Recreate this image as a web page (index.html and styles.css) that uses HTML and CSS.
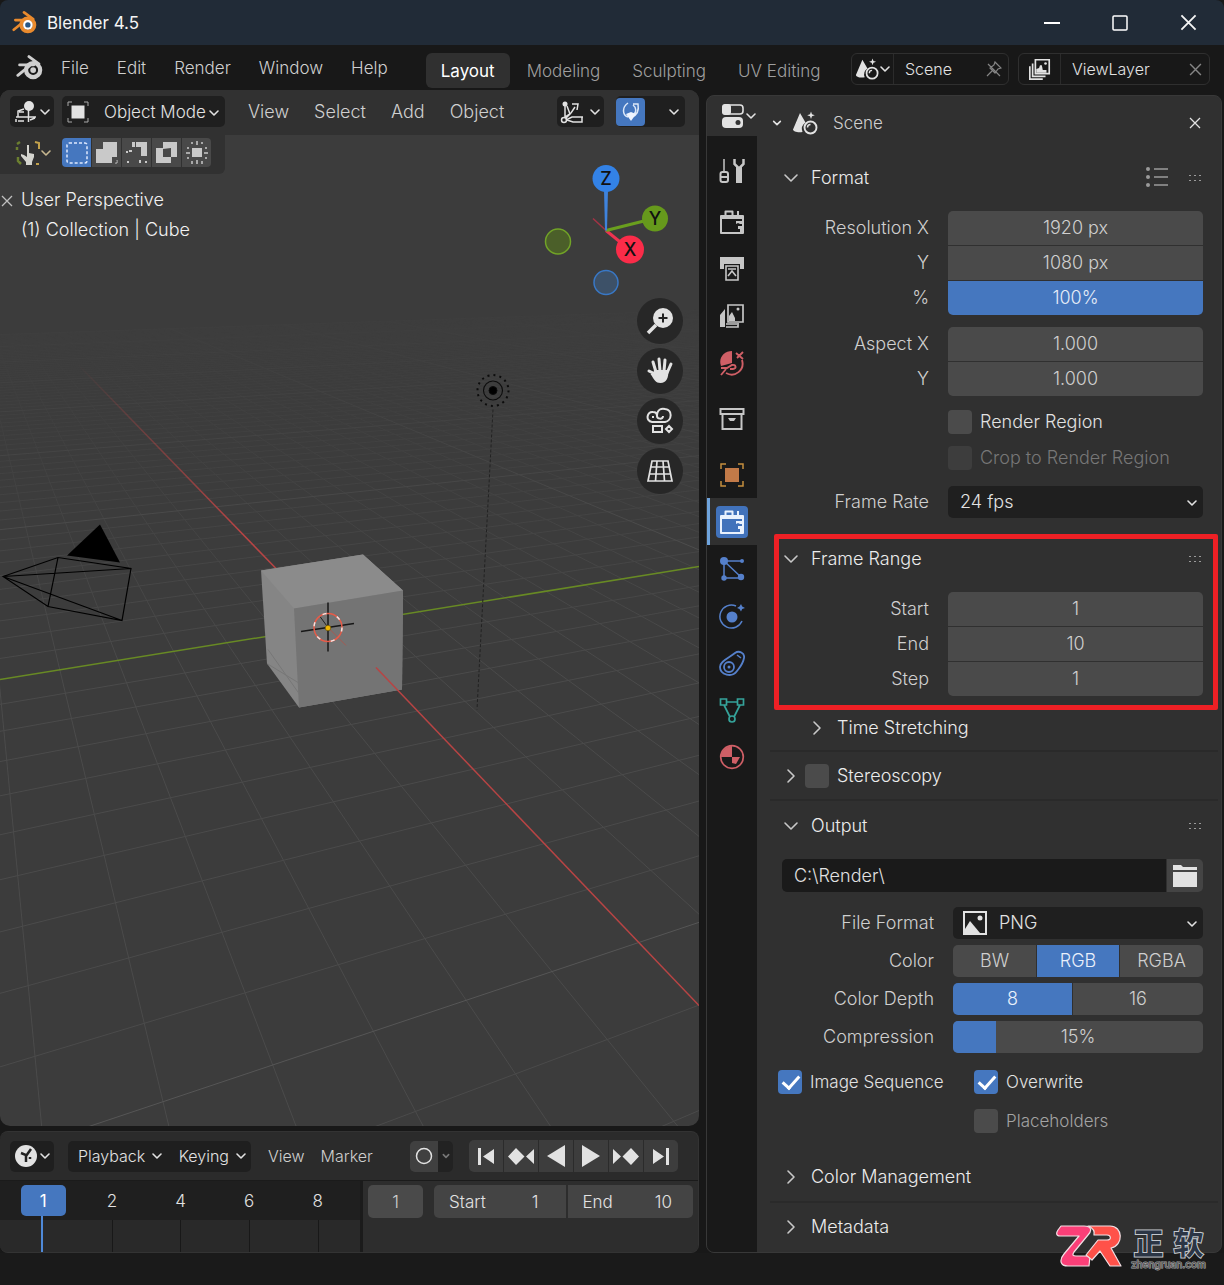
FILE: index.html
```html
<!DOCTYPE html>
<html lang="en">
<head>
<meta charset="utf-8">
<title>Blender 4.5</title>
<link rel="stylesheet" href="styles.css">
</head>
<body>
<svg class="defs" aria-hidden="true">
  <defs>
    <symbol id="chev" viewBox="0 0 12 12"><path vector-effect="non-scaling-stroke" d="M2 4l4 4 4-4" fill="none" stroke="currentColor" stroke-width="1.600" stroke-linecap="round" stroke-linejoin="round"/></symbol>
    <symbol id="x" viewBox="0 0 12 12"><path d="M1 1l10 10M11 1L1 11" fill="none" stroke="currentColor" stroke-width="1.300"/></symbol>
    <symbol id="blender" viewBox="0 0 26 26"><g fill="none" stroke="currentColor"><circle cx="16.500" cy="15.500" r="6.800" stroke-width="4"/><path d="M12.500 2.500L22 9.500M3.500 10.500H17M1.800 20.500L13 11.500" stroke-width="2.800" stroke-linecap="round"/></g></symbol>
    <symbol id="scene" viewBox="0 0 26 26"><path fill="currentColor" d="M8 3l5.500 9.500A8 8 0 0 0 10.500 22C6 23 1 21.500 1 19.500zM19 1.500l1 2.700 2.800 1-2.800 1-1 2.800-1-2.800-2.800-1 2.800-1z"/><circle cx="18.500" cy="17.500" r="6" fill="none" stroke="currentColor" stroke-width="1.900"/><path d="M15.500 17.500a3 3 0 0 1 3-3" fill="none" stroke="currentColor" stroke-width="1.500"/></symbol>
    <symbol id="layers" viewBox="0 0 26 26"><path fill="none" stroke="currentColor" stroke-width="1.800" d="M8 3h15v15H8zM5 7v14h14M2 10v14h14"/><path fill="currentColor" d="M9 17v-4l3-1 1-3h2l1 5h4v3z"/><circle cx="19" cy="7" r="1.400" fill="currentColor"/></symbol>
    <symbol id="camcase" viewBox="0 0 26 26"><path fill="none" stroke="currentColor" stroke-width="2" stroke-linejoin="round" d="M2 7h22v17H2zM6.500 6V2.500h7V6"/><path fill="currentColor" d="M2 6h22v4H2zM18 2h2v4h-2zM17 12h7v3h-3l-2-1-2 1zM19 17h5v6h-3v-3h-2z"/></symbol>
    <symbol id="grip" viewBox="0 0 14 8"><path fill="currentColor" d="M1 1h2v1H1zM6 1h2v1H6zM11 1h2v1h-2zM1 6h2v1H1zM6 6h2v1H6zM11 6h2v1h-2z"/></symbol>
  </defs>
</svg>
<div class="app">
  <header class="titlebar">
    <svg class="app-logo" viewBox="0 0 26 26"><use href="#blender"/><circle cx="16.500" cy="15.500" r="5" fill="#fff"/><circle cx="16.500" cy="15.500" r="2.800" fill="#265787"/></svg>
    <h1>Blender 4.5</h1>
    <div class="win-buttons">
      <button aria-label="Minimize"><svg width="16" height="16"><path d="M0 8h16" stroke="#fff" stroke-width="2"/></svg></button>
      <button aria-label="Maximize"><svg width="16" height="16"><rect x="1" y="1" width="14" height="14" rx="1" fill="none" stroke="#fff" stroke-width="1.500"/></svg></button>
      <button aria-label="Close"><svg width="17" height="17"><use href="#x"/></svg></button>
    </div>
  </header>

  <div class="topbar">
    <nav class="menus main-menus">
      <button aria-label="Blender"><svg width="27" height="27" viewBox="0 0 26 26"><use href="#blender"/><circle cx="16.500" cy="15.500" r="2.800" fill="currentColor"/></svg></button>
      <button>File</button><button>Edit</button><button>Render</button><button>Window</button><button>Help</button>
    </nav>
    <nav class="workspaces">
      <button class="current">Layout</button><button>Modeling</button><button>Sculpting</button><button>UV Editing</button>
    </nav>
    <div class="datablock">
      <button aria-label="Browse scene"><svg width="24" height="24"><use href="#scene"/></svg><svg class="chev" width="12" height="12"><use href="#chev"/></svg></button>
      <input class="scene-name" aria-label="Scene" value="Scene">
      <button class="dim" aria-label="Pin scene"><svg width="16" height="16" viewBox="0 0 16 16"><path d="M1 15l5-5M2 3l12 12M9 1l6 6-3 1-3 4-5-5 4-3z" fill="none" stroke="currentColor" stroke-width="1.200"/></svg></button>
    </div>
    <div class="datablock layer">
      <button aria-label="Browse view layer"><svg width="24" height="24"><use href="#layers"/></svg></button>
      <input class="layer-name" aria-label="View layer" value="ViewLayer">
      <button class="dim" aria-label="Remove view layer"><svg width="13" height="13"><use href="#x"/></svg></button>
    </div>
  </div>

  <main class="workspace">
    <div class="left">
      <section class="viewport" aria-label="3D viewport">
        <svg class="scene" viewBox="0 90 699 1037" preserveAspectRatio="xMidYMid slice">
          <defs>
            <linearGradient id="fog" gradientUnits="userSpaceOnUse" x1="0" y1="280" x2="0" y2="680"><stop offset="0" stop-color="#000"/><stop offset=".4" stop-color="#555"/><stop offset="1" stop-color="#fff"/></linearGradient>
            <mask id="far" maskUnits="userSpaceOnUse" x="0" y="90" width="699" height="1037"><rect y="90" width="699" height="1037" fill="url(#fog)"/></mask>
            <linearGradient id="redfade" gradientUnits="userSpaceOnUse" x1="78" y1="365" x2="240" y2="532"><stop offset="0" stop-color="#b04242" stop-opacity="0"/><stop offset="1" stop-color="#b84444"/></linearGradient>
          </defs>
          <g mask="url(#far)" fill="none">
            <path id="grid-minor" stroke="#4b4b4b"/>
            <path id="grid-major" stroke="#565656"/>
          </g>
          <path d="M78 365L277 570" stroke="url(#redfade)" stroke-width="1.500"/>
          <path d="M0 680L699 567" stroke="#688a24" stroke-width="1.500"/>
          <path d="M493 410L477 710" stroke="#222" stroke-dasharray="3 2"/>
          <path d="M261 571L363 555L403 591L402 690L299 708L267 664z" fill="#858585"/>
          <path d="M261 571L363 555L403 591L294 609z" fill="#8b8b8b"/>
          <path d="M294 609L403 591L402 690L299 708z" fill="#747474"/>
          <path d="M268 650L299 694M267 664L298 683" stroke="#777" fill="none"/>
          <path d="M376 668L699 1006" stroke="#b84444" stroke-width="1.500"/>
          <g fill="none">
            <path d="M301 632L354 624M328 603V652" stroke="#171717" stroke-width="1.500"/>
            <path d="M320 617l8 11" stroke="#222"/><path d="M330 630l16 16" stroke="#a65a50"/>
            <circle cx="328" cy="628" r="14" stroke="#e75b48" stroke-width="1.500"/>
            <circle cx="328" cy="628" r="14" stroke="#f3e5e2" stroke-width="1.500" stroke-dasharray="4 11"/>
          </g>
          <circle cx="328" cy="628.500" r="2.800" fill="#f0b500" stroke="#5b4700" stroke-width=".6"/>
          <path d="M100 525L67 556L120 563z" fill="#000"/>
          <path d="M3 577L58 558L131 569L122 621L48 607zM3 577L131 569M3 577L122 621M58 558L48 607" fill="none" stroke="#000" stroke-width="1.200"/>
          <g fill="none" stroke="#0c0c0c">
            <circle cx="493" cy="391" r="9.500" stroke-width="1.100"/>
            <circle cx="493" cy="391" r="15.500" stroke-width="2" stroke-dasharray="2 4.087"/>
            <circle cx="493" cy="391" r="4" fill="#000"/>
          </g>
          <g class="gizmo">
            <path d="M593 219L606 231" stroke="#a33345" stroke-width="1.500"/>
            <path d="M606 231L622 244" stroke="#ee3350" stroke-width="3"/>
            <path d="M606 231L646 221" stroke="#6a9f1e" stroke-width="3"/>
            <path d="M604 190h4l-1 41h-2z" fill="#3f83dc"/>
            <circle cx="606" cy="179" r="13.500" fill="#3382e6"/><circle cx="655" cy="219" r="13" fill="#66991c"/><circle cx="630" cy="250" r="14" fill="#fb2c49"/>
            <circle cx="558" cy="242" r="12.500" fill="#4b5f29" stroke="#71a327" stroke-width="1.500"/><circle cx="606" cy="283" r="12" fill="#3d5168" stroke="#3978c6" stroke-width="1.500"/>
            <text x="606" y="185">Z</text><text x="655" y="225">Y</text><text x="630" y="256">X</text>
          </g>
        </svg>

        <div class="view-header">
          <button class="dark editor-type" aria-label="Editor type"><svg width="24" height="24" viewBox="0 0 24 24"><circle cx="15" cy="6" r="5" fill="currentColor"/><path d="M14.500 2v20M2 17h20M4 17v-6l6-2M2 22v-3M5 12h5M4 21h6M16 20l5-2" fill="none" stroke="currentColor" stroke-width="1.500"/></svg><svg width="12" height="12"><use href="#chev"/></svg></button>
          <div class="dark mode">
            <svg width="22" height="22" viewBox="0 0 22 22"><path fill="currentColor" d="M4.500 4.500h13v13h-13z"/><path d="M1 5V1h4M17 1h4v4M21 17v4h-4M5 21H1v-4" fill="none" stroke="#aaa"/></svg>
            <select aria-label="Mode"><option>Object Mode</option></select>
            <svg class="arrow" width="12" height="12"><use href="#chev"/></svg>
          </div>
          <nav class="menus view-menus"><button>View</button><button>Select</button><button>Add</button><button>Object</button></nav>
          <button class="dark orient" aria-label="Transform orientation"><svg width="24" height="24" viewBox="0 0 24 24"><circle cx="5" cy="4" r="2.500" fill="currentColor"/><circle cx="4" cy="20" r="2.500" fill="none" stroke="currentColor" stroke-width="1.500"/><path d="M5 4v14M7 6l3 8-4 4M5 17l6-4 4-6M12 4h6l-1 6M6 20l6-3h11M15 17h7v5h-9l-6-2" fill="none" stroke="currentColor" stroke-width="1.500"/></svg><svg width="12" height="12"><use href="#chev"/></svg></button>
          <div class="dark snap">
            <button class="on" aria-label="Snap"><svg width="22" height="22" viewBox="0 0 22 22"><path d="M8 2C2 6 2 14 8 16M13 3h5c1 6-1 11-6 13M13 4c4 3 3 7 1 9" fill="none" stroke="#dce8f8" stroke-width="1.500"/><path d="M6 13l5-2 5 2-5 7z" fill="#eef4ff"/></svg></button>
            <button class="snap-more" aria-label="Snap options"><svg width="12" height="12"><use href="#chev"/></svg></button>
          </div>
        </div>
        <div class="tool-header">
          <button class="tool" aria-label="Active tool"><svg width="25" height="26" viewBox="0 0 25 26"><path d="M2 4l3-2M2 7v3M3 17v4l3 3" stroke="#6b7f30" stroke-width="2.500"/><path d="M20 2l4 1v6M21 24h3" fill="none" stroke="#c3a24c" stroke-width="2"/><path fill="#d5d5cf" d="M12 5h2v8l5 1v3l-2 5v3h-6v-3l-5-6v-2l3 1 3 2z"/></svg><svg width="12" height="12"><use href="#chev"/></svg></button>
          <div class="select-modes">
            <button class="on" aria-label="Set"><svg width="24" height="24"><rect x="2" y="2" width="20" height="20" rx="2" fill="none" stroke="#dfeaff" stroke-width="1.500" stroke-dasharray="3 2"/></svg></button>
            <button aria-label="Extend"><svg width="24" height="24"><path fill="currentColor" d="M8 1h14v15h-5v6H1V8h7z"/><path stroke="currentColor" d="M20 22h2v-3"/></svg></button>
            <button aria-label="Subtract"><svg width="24" height="24"><path fill="currentColor" d="M7 1h3v5H7zM11 1h11v14h-6V6h-5zM4 9h3v2H4zM1 10h2v2H1zM2 20h2v2H2zM14 19h2v3h-2zM20 20h2v2h-2z"/></svg></button>
            <button aria-label="Invert"><svg width="24" height="24"><path fill="currentColor" fill-rule="evenodd" d="M8 1h14v15h-6v6H1V7h7zM8 8v8h8V7z"/></svg></button>
            <button aria-label="Intersect"><svg width="24" height="24"><path fill="currentColor" d="M7 7h10v9H7z"/><path d="M12 0v4M12 19v4M1 12h4M19 12h4M7 1v2M17 1v2M7 20v3M17 20v3M2 7h2M20 7h2M2 17h2M20 17h2" stroke="currentColor" stroke-width="1.500"/></svg></button>
          </div>
        </div>
        <div class="view-info"><svg width="12" height="12"><use href="#x"/></svg><p>User Perspective<br>(1) Collection | Cube</p></div>
        <div class="nav-buttons">
          <button aria-label="Zoom"><svg width="28" height="28" viewBox="0 0 28 28"><circle cx="17" cy="11" r="10" fill="currentColor"/><path d="M10 18l-8 8" stroke="currentColor" stroke-width="3.500"/><path d="M12.500 11h9M17 6.500v9" stroke="#222" stroke-width="2"/></svg></button>
          <button aria-label="Pan"><svg width="28" height="28" viewBox="0 0 28 28"><path fill="none" stroke="currentColor" stroke-width="3" stroke-linecap="round" d="M9 17L3 14M10 15L7 5M14 14l-1-12M18 14l1-11M21 16l4-9"/><path fill="currentColor" d="M8 13h14.500c0 8-2 13-8 13-5 0-6-3-10-9l3-1z"/></svg></button>
          <button aria-label="Camera view"><svg width="28" height="28" viewBox="0 0 28 28"><path d="M6 15C-1 14 1 4 7 5c3 0 4 2 4 4 0-7 5-8 8-7 8 1 7 12 0 13zM11 9c0 3 6 4 6 0M7 9v2M7 19h9v6H7zM23 19l3 3-3 3-3-3z" fill="none" stroke="currentColor" stroke-width="2"/></svg></button>
          <button aria-label="Toggle perspective"><svg width="28" height="28" viewBox="0 0 28 28"><path d="M6 4h16l4 20H2zM11 4L9.500 24M17 4l1.500 20M5 10h18M3.500 17h21" fill="none" stroke="currentColor" stroke-width="1.700"/></svg></button>
        </div>
      </section>

      <section class="timeline" aria-label="Timeline">
        <div class="tl-header">
          <button class="dark editor-type" aria-label="Editor type"><svg width="24" height="24" viewBox="0 0 24 24"><circle cx="12" cy="12" r="11" fill="currentColor"/><path d="M12 18v-7L7 9M12 12l5-7M16 13v2" fill="none" stroke="#222" stroke-width="2.500"/></svg><svg width="12" height="12"><use href="#chev"/></svg></button>
          <div class="dark tl-menus"><button>Playback <svg width="12" height="12"><use href="#chev"/></svg></button><button>Keying <svg width="12" height="12"><use href="#chev"/></svg></button></div>
          <nav class="menus tl-links"><button>View</button><button>Marker</button></nav>
          <div class="record"><button aria-label="Auto keying"><svg width="18" height="18"><circle cx="9" cy="9" r="7.500" fill="none" stroke="currentColor" stroke-width="1.500"/></svg></button><button class="rec-more" aria-label="Auto keying options"><svg width="8" height="8"><use href="#chev"/></svg></button></div>
          <div class="transport">
            <button aria-label="Jump to start"><svg width="26" height="20"><path fill="currentColor" d="M5 2h3v17H5zM21 3v15L10 10.500z"/></svg></button>
            <button aria-label="Previous keyframe"><svg width="26" height="20"><path fill="currentColor" d="M8 2l8.500 8.500L8 19l-8-8.500zM26 3v15l-8-7.500z"/></svg></button>
            <button aria-label="Play backwards"><svg width="26" height="22"><path fill="currentColor" d="M22 0v22L4 11z"/></svg></button>
            <button aria-label="Play"><svg width="26" height="22"><path fill="currentColor" d="M4 0v22l18-11z"/></svg></button>
            <button aria-label="Next keyframe"><svg width="26" height="20"><path fill="currentColor" d="M18 2l8 8.500-8 8.500-8.500-8.500zM0 3v15l8-7.500z"/></svg></button>
            <button aria-label="Jump to end"><svg width="26" height="20"><path fill="currentColor" d="M18 2h3v17h-3zM5 3v15l11-7.500z"/></svg></button>
          </div>
        </div>
        <div class="tl-body">
          <ol class="ruler"><li class="now"><b>1</b></li><li>2</li><li>4</li><li>6</li><li>8</li></ol>
          <div class="tl-fields">
            <input class="num frame" aria-label="Current frame" value="1">
            <div class="range">
              <label>Start <input value="1"></label>
              <label>End <input value="10"></label>
            </div>
          </div>
        </div>
      </section>
    </div>

    <section class="properties" aria-label="Properties">
      <div class="prop-side">
        <button class="prop-type" aria-label="Editor type"><svg width="24" height="24" viewBox="0 0 24 24"><rect x="2" y="1" width="20" height="9" rx="3" fill="none" stroke="currentColor" stroke-width="1.600"/><rect x="1" y="0" width="9" height="11" rx="3" fill="currentColor"/><rect x="1" y="13" width="21" height="11" rx="4" fill="currentColor"/><circle cx="17" cy="18.500" r="2.500" fill="#333"/></svg><svg width="12" height="12"><use href="#chev"/></svg></button>
        <nav class="tabs">
          <button aria-label="Tool"><svg viewBox="0 0 26 26"><path d="M5 1v14" stroke="currentColor" stroke-width="1.500"/><rect x="1.500" y="14" width="7.500" height="10" rx="2" fill="none" stroke="currentColor" stroke-width="2"/><path d="M1.500 19h7" stroke="currentColor" stroke-width="2"/><path d="M15.500 1v5l4.500 4.500L24.500 6V1" fill="none" stroke="currentColor" stroke-width="2.500"/><path d="M17 9h6v16h-6z" fill="currentColor"/></svg></button>
          <button class="group-a" aria-label="Render"><svg viewBox="0 0 26 26"><use href="#camcase"/></svg></button>
          <button aria-label="Output"><svg viewBox="0 0 26 26"><path fill="currentColor" d="M1 1h24v12h-4V8H5v5H1z"/><path d="M7 10h12v14H7zM9 13h8M9 20l4-5 4 5" fill="none" stroke="currentColor" stroke-width="1.600"/></svg></button>
          <button aria-label="View layer"><svg viewBox="0 0 26 26"><path fill="currentColor" d="M1 12l5-6v18H1zM10 18v-5l3-4 3 6v3z"/><path d="M9 2h15v17H9zM7 24h12v-4M7 21h11" fill="none" stroke="currentColor" stroke-width="1.700"/><circle cx="19" cy="6" r="1.500" fill="currentColor"/></svg></button>
          <button class="red" aria-label="Scene"><svg viewBox="0 0 26 26"><path fill="currentColor" d="M2 16C-1 8 5 1 13 1v12z"/><path d="M2 18h6l5-3c4-1 5 4 1 4h-3M2 25l5-6M7 23c9 5 19-3 16-13M17 3l7 6M24 2l-6 6" fill="none" stroke="currentColor" stroke-width="1.900"/></svg></button>
          <button class="group-b" aria-label="Collection"><svg viewBox="0 0 26 26"><path d="M1.500 3h23v5h-23zM3.500 8v15h19V8" fill="none" stroke="currentColor" stroke-width="2"/><path fill="currentColor" d="M9 12h8l-2 3h-4z"/></svg></button>
          <button class="group-b orange" aria-label="Object"><svg viewBox="0 0 26 26"><path fill="#c27a48" d="M6 6h14v14H6z"/><path d="M2 7V2h5M19 2h5v5M24 19v5h-5M7 24H2v-5" fill="none" stroke="currentColor" stroke-width="1.500"/></svg></button>
          <button class="current" aria-label="Output properties"><span><svg viewBox="0 0 26 26"><use href="#camcase"/></svg></span></button>
          <button class="blue" aria-label="Particles"><svg viewBox="0 0 26 26"><path d="M5 5h18M5 5v17h17M5 5l18 17" fill="none" stroke="currentColor" stroke-width="1.500"/><g fill="currentColor"><circle cx="5" cy="5" r="4"/><circle cx="23" cy="5" r="2"/><circle cx="5" cy="22" r="2.700"/><circle cx="22" cy="21" r="3.200"/></g></svg></button>
          <button class="blue" aria-label="Physics"><svg viewBox="0 0 26 26"><path d="M17 3A11.500 11.500 0 1 0 23 18" fill="none" stroke="currentColor" stroke-width="1.500"/><circle cx="13" cy="14" r="5.500" fill="currentColor"/><path fill="currentColor" d="M22 1l1.200 2.500L26 5l-2.800 1L22 8.500 20.500 6 18 5l2.500-1.500z"/></svg></button>
          <button class="blue" aria-label="Constraints"><svg viewBox="0 0 26 26"><path d="M16 3c4-3 10 0 9 5-1 6-4 9-7 13-5 7-17 4-17-4C1 11 10 8 16 3z" fill="none" stroke="currentColor" stroke-width="1.800"/><circle cx="10" cy="17" r="5" fill="none" stroke="currentColor" stroke-width="1.800"/><circle cx="10" cy="17" r="1.500" fill="currentColor"/><path d="M18 5l4 3" stroke="currentColor" stroke-width="1.500"/></svg></button>
          <button class="teal" aria-label="Data"><svg viewBox="0 0 26 26"><path d="M7 5h12M5 8l6 12M21 8l-6 12M1.500 2h6v6h-6zM18.500 2h6v6h-6z" fill="none" stroke="currentColor" stroke-width="1.700"/><circle cx="13" cy="22" r="3" fill="none" stroke="currentColor" stroke-width="1.700"/></svg></button>
          <button class="red" aria-label="Material"><svg viewBox="0 0 26 26"><circle cx="13" cy="13" r="11.300" fill="none" stroke="currentColor" stroke-width="1.700"/><path fill="currentColor" d="M13 13H2C2 7 7 2 13 2zM13 13h8l-4 7-4-1z"/></svg></button>
        </nav>
      </div>

      <div class="prop-main">
        <div class="crumb"><svg class="small" width="10" height="10"><use href="#chev"/></svg><svg width="26" height="26"><use href="#scene"/></svg><span>Scene</span><button aria-label="Close"><svg width="12" height="12"><use href="#x"/></svg></button></div>

        <section class="panel">
          <h2><svg class="tri" viewBox="0 0 12 12"><use href="#chev"/></svg>Format<span class="tools"><svg width="22" height="22" viewBox="0 0 22 22"><path d="M8 2h14M8 10h14M8 18h14" stroke="currentColor" stroke-width="1.500"/><g fill="currentColor"><circle cx="2" cy="2" r="2"/><circle cx="2" cy="10" r="2"/><circle cx="2" cy="18" r="2"/></g></svg><svg width="14" height="8"><use href="#grip"/></svg></span></h2>
          <div class="body format">
            <div class="stack">
              <div class="row"><label for="rx">Resolution X</label><input id="rx" class="num" value="1920 px"></div>
              <div class="row"><label for="ry">Y</label><input id="ry" class="num" value="1080 px"></div>
              <div class="row"><label for="rp">%</label><input id="rp" class="num full" value="100%"></div>
            </div>
            <div class="stack">
              <div class="row"><label for="ax">Aspect X</label><input id="ax" class="num" value="1.000"></div>
              <div class="row"><label for="ay">Y</label><input id="ay" class="num" value="1.000"></div>
            </div>
            <div class="checks">
              <label class="check"><input type="checkbox">Render Region</label>
              <label class="check off"><input type="checkbox" disabled>Crop to Render Region</label>
            </div>
            <div class="row"><label for="fps">Frame Rate</label><div class="drop"><select id="fps"><option>24 fps</option></select><svg class="arrow" width="12" height="12"><use href="#chev"/></svg></div></div>
          </div>
        </section>

        <section class="panel highlight">
          <h2><svg class="tri" viewBox="0 0 12 12"><use href="#chev"/></svg>Frame Range<span class="tools"><svg width="14" height="8"><use href="#grip"/></svg></span></h2>
          <div class="body stack">
            <div class="row"><label for="fs">Start</label><input id="fs" class="num" value="1"></div>
            <div class="row"><label for="fe">End</label><input id="fe" class="num" value="10"></div>
            <div class="row"><label for="ft">Step</label><input id="ft" class="num" value="1"></div>
          </div>
        </section>
        <section class="panel sub"><h2><svg class="tri shut" viewBox="0 0 12 12"><use href="#chev"/></svg>Time Stretching</h2></section>

        <section class="panel closed ruled stereo"><h2><svg class="tri shut" viewBox="0 0 12 12"><use href="#chev"/></svg><label class="check"><input type="checkbox">Stereoscopy</label></h2></section>

        <section class="panel ruled output">
          <h2><svg class="tri" viewBox="0 0 12 12"><use href="#chev"/></svg>Output<span class="tools"><svg width="14" height="8"><use href="#grip"/></svg></span></h2>
          <div class="body">
            <div class="path"><input aria-label="Output path" value="C:\Render\"><button aria-label="Browse"><svg width="24" height="22"><path fill="currentColor" d="M0 0h8l2 2h14v3H0zM0 7h24v15H0z"/></svg></button></div>
            <div class="fields">
              <div class="row"><label for="ff">File Format</label><div class="drop pic"><svg class="png" width="24" height="24"><rect x="1" y="1" width="22" height="22" fill="none" stroke="currentColor" stroke-width="2"/><path fill="currentColor" d="M2 22V18l5-8 10 12z"/><circle cx="17" cy="7" r="2.500" fill="currentColor"/></svg><select id="ff"><option>PNG</option></select><svg class="arrow" width="12" height="12"><use href="#chev"/></svg></div></div>
              <div class="row" role="radiogroup" aria-labelledby="cl"><span class="name" id="cl">Color</span><div class="seg three"><label><input type="radio" name="color">BW</label><label><input type="radio" name="color" checked>RGB</label><label><input type="radio" name="color">RGBA</label></div></div>
              <div class="row" role="radiogroup" aria-labelledby="dl"><span class="name" id="dl">Color Depth</span><div class="seg two"><label><input type="radio" name="depth" checked>8</label><label><input type="radio" name="depth">16</label></div></div>
              <div class="row"><label for="cp">Compression</label><div class="slider"><input id="cp" type="range" min="0" max="100" value="15"><output for="cp">15%</output></div></div>
            </div>
            <div class="pairs">
              <label class="check"><input type="checkbox" checked>Image Sequence</label>
              <label class="check"><input type="checkbox" checked>Overwrite</label>
              <label class="check weak"><input type="checkbox">Placeholders</label>
            </div>
          </div>
        </section>
        <section class="panel closed"><h2><svg class="tri shut" viewBox="0 0 12 12"><use href="#chev"/></svg>Color Management</h2></section>
        <section class="panel closed ruled"><h2><svg class="tri shut" viewBox="0 0 12 12"><use href="#chev"/></svg>Metadata</h2></section>
      </div>
    </section>
  </main>
  <footer class="statusbar"></footer>
  <div class="brand">
    <svg width="66" height="42" viewBox="0 0 66 42"><g stroke="#f1dfe4" stroke-width="1.200" stroke-linejoin="round"><path fill="#fb3f78" d="M5 1h23c8 0 8 5 4 9L18 27c-2 3-1 4 2 4h14l-1 10H12c-8 0-9-6-4-12l15-18H4C0 11 0 8 2 5z"/><path fill="#ff5149" d="M32 1h22c13 0 14 19 1 22l10 18H54L44 26l-8 9-6-5 12-15h9c5 0 4-5 0-5H38c1-4-1-7-6-9z"/></g></svg>
    <div class="brand-text"><strong><span>正</span><span>软</span></strong><small>zhengruan.com</small></div>
  </div>
</div>
<script src="grid.js"></script>
</body>
</html>
```
FILE: styles.css
```css
:root {
  --ink: #e2e2e2;
  --soft: #cfcfcf;
  --blue: #4577bf;
  --field: #4a4a4a;
  --dark: #1f1f1f;
  --panel: #303030;
  --line: #2a2a2a;
}
* { box-sizing: border-box; }
body { margin: 0; background: #181818; color: var(--ink); font: 18px/24px Inter, "Liberation Sans", sans-serif; font-weight: 300; }
button, input, select { font: inherit; color: inherit; background: none; border: 0; padding: 0; margin: 0; outline: none; }
button { display: flex; align-items: center; justify-content: center; white-space: nowrap; }
input { min-width: 0; }
select { appearance: none; width: 100%; height: 100%; }
svg { display: block; flex: none; }
h1, h2, p, ol { margin: 0; padding: 0; font-size: inherit; font-weight: inherit; }
.defs { position: absolute; width: 0; height: 0; }
.app { position: relative; display: flex; flex-direction: column; min-height: 100vh; }

.titlebar { display: flex; align-items: center; gap: 10px; height: 45px; padding: 0 27px 0 12px; background: #212b37; color: #f5f5f5; font-size: 17px; border-radius: 8px 8px 0 0; }
.titlebar h1 { font-weight: 400; }
.app-logo { width: 25px; height: 25px; color: #e98a2d; }
.win-buttons { display: flex; gap: 52px; margin-left: auto; }

.topbar { display: flex; height: 45px; padding-right: 14px; background: #181818; font-size: 17px; }
.menus { display: flex; align-items: center; color: var(--soft); }
.main-menus { gap: 28px; padding: 0 38px 0 16px; }
.main-menus button:first-child { margin-right: -10px; }
.workspaces { display: flex; align-items: center; gap: 2px; margin-top: 8px; height: 35px; color: #9f9f9f; }
.workspaces button { height: 35px; padding: 0 15px; border-radius: 6px; }
.workspaces .current { background: var(--panel); color: #fff; font-weight: 400; }
.datablock { display: flex; flex: 0 0 158px; min-width: 0; height: 32px; margin: 8px 0 0 9px; background: #181818; border: 1px solid #2f2f2f; border-radius: 6px; font-size: 16px; }
.workspaces + .datablock { margin-left: auto; }
.datablock.layer { flex-basis: 192px; }
.datablock button:first-child { flex: none; width: 42px; border-right: 1px solid #2b2b2b; }
.datablock input { flex: 1; width: 0; padding-left: 11px; }
.datablock .dim { flex: none; width: 28px; color: #858585; }

.workspace { flex: 1; display: flex; gap: 7px; }
.left { flex: 1; min-width: 0; display: flex; flex-direction: column; gap: 5px; }
.viewport { flex: 1; position: relative; background: #3c3c3c; border-radius: 10px; overflow: hidden; }
.scene { position: absolute; inset: 0; width: 100%; height: 100%; }
.gizmo text { font-size: 18px; font-weight: 500; text-anchor: middle; fill: #111; }
.dark { background: var(--dark); border-radius: 5px; }
.view-header { position: relative; display: flex; align-items: center; height: 45px; padding: 0 14px 2px 10px; background: #313131; }
.view-header .dark { height: 31px; }
.editor-type { width: 44px; height: 31px; gap: 1px; }
.mode { position: relative; display: flex; align-items: center; width: 163px; margin-left: 8px; padding-left: 5px; font-size: 17px; }
.mode select { padding-left: 15px; }
.arrow { position: absolute; right: 5px; top: 50%; margin-top: -5px; pointer-events: none; }
.view-menus { gap: 25px; padding-left: 23px; }
.orient { width: 47px; margin-left: auto; gap: 5px; }
.snap { display: flex; width: 69px; margin-left: 12px; align-items: center; }
.snap button { height: 28px; }
.snap .on { flex: 0 0 29px; border-radius: 4px; background: var(--blue); }
.snap-more { flex: 1; padding-left: 18px; }
.tool-header { position: relative; display: flex; align-items: center; gap: 10px; width: 225px; height: 39px; padding: 0 0 4px 15px; background: #313131; border-radius: 0 0 6px 0; }
.tool { width: 37px; color: #c8b890; }
.select-modes { display: flex; gap: 1px; color: #c9c9c9; }
.select-modes button { width: 29px; height: 29px; background: #494949; }
.select-modes button:first-child { border-radius: 4px 0 0 4px; }
.select-modes button:last-child { border-radius: 0 4px 4px 0; }
.select-modes .on { background: var(--blue); }
.view-info { position: relative; display: flex; gap: 8px; align-items: start; padding: 11px 0 0 1px; line-height: 30px; color: #f2f2f2; }
.view-info svg { margin-top: 10px; color: #c0c0c0; }
.nav-buttons { position: absolute; right: 16px; top: 208px; display: grid; gap: 4px; }
.nav-buttons button { width: 46px; height: 46px; border-radius: 50%; background: #272727; }

.timeline { height: 122px; background: #2b2b2b; border: 1px solid #333; border-left: 0; border-radius: 8px; overflow: hidden; }
.tl-header { display: flex; align-items: center; height: 48px; padding: 0 20px 0 10px; font-size: 16px; }
.tl-menus { display: flex; justify-content: space-between; width: 183px; height: 31px; margin-left: 14px; padding: 0 4px 0 10px; }
.tl-menus button { gap: 6px; }
.tl-links { gap: 16px; padding-left: 17px; }
.record { display: flex; height: 31px; margin-left: auto; border-radius: 5px; overflow: hidden; }
.record button { width: 28px; background: #404040; }
.record .rec-more { width: 15px; background: #222; color: #777; }
.transport { display: flex; gap: 1px; margin-left: 16px; }
.transport button { width: 34px; height: 32px; background: #3d3d3d; }
.transport button:first-child { border-radius: 5px 0 0 5px; }
.transport button:last-child { border-radius: 0 5px 5px 0; }
.tl-body { display: flex; height: 72px; border-top: 1px solid #1b1b1b; font-size: 17px; }
.ruler { display: flex; flex: 1; padding: 0 8px 0 9px; list-style: none; background: linear-gradient(#1f1f1f 39px, #292929 39px); }
.ruler li { position: relative; flex: 1 1 0; padding: 8px 0; text-align: center; }
.ruler li::after { content: ""; position: absolute; left: 50%; top: 39px; bottom: 0; width: 1px; background: #181818; }
.ruler .now { padding: 4px 0; }
.ruler .now b { display: block; width: 45px; height: 31px; margin: 0 auto; border-radius: 5px; background: var(--blue); color: #fff; font-weight: 400; line-height: 32px; }
.ruler .now::after { top: 35px; width: 2px; margin-left: -2px; background: #4f89d8; }
.tl-fields { display: flex; flex: 0 0 338px; gap: 11px; padding: 4px 5px 0 5px; background: #2d2d2d; border-left: 3px solid #1b1b1b; }
.num { width: 100%; height: 34px; padding-bottom: 2px; text-align: center; background: var(--field); color: var(--soft); }
.frame { width: 55px; height: 33px; padding: 0; border-radius: 5px; }
.range { display: flex; flex: 1; gap: 2px; height: 33px; border-radius: 5px; overflow: hidden; }
.range label { display: flex; flex: 1; align-items: center; justify-content: space-between; padding: 0 21px 0 15px; background: #444; }
.range label:first-child { padding-right: 27px; }
.range input { width: 30px; text-align: right; }

.properties { display: flex; flex: 0 0 516px; margin: 5px 2px 0 0; background: var(--panel); border: 1px solid #383838; border-radius: 8px; overflow: hidden; }
.prop-side { display: flex; flex-direction: column; width: 50px; }
.prop-type { height: 40px; padding-left: 13px; gap: 0; }
.tabs { flex: 1; padding-top: 11px; background: #191919; color: #c6c6c6; }
.tabs button { width: 100%; height: 47px; }
.tabs svg { width: 26px; height: 26px; }
.tabs .group-a { margin-top: 4px; }
.tabs .group-b { margin-top: 9px; }
.tabs .red { color: #cf5f66; }
.tabs .orange { color: #c58e3e; }
.tabs .blue { color: #5580cb; }
.tabs .teal { color: #35a39a; }
.tabs .current { background: var(--panel); border-left: 3px solid #6fa4dd; padding-right: 3px; }
.tabs .current span { padding: 3px; border-radius: 4px; background: #4172bb; color: #e9f1fd; }
.prop-main { flex: 1; padding: 0 3px 0 13px; }
.crumb { display: flex; align-items: center; height: 54px; padding: 0 17px 0 2px; font-size: 17px; }
.crumb .small { margin-right: 10px; }
.crumb span { margin-left: 15px; color: var(--soft); }
.crumb button { margin-left: auto; }

.panel h2 { display: flex; align-items: center; height: 56px; padding: 0 16px 0 12px; color: #ececec; }
.tri { width: 18px; height: 18px; margin-right: 11px; color: #c8c8c8; }
.tri.shut { transform: rotate(-90deg); }
.tools { display: flex; align-items: center; gap: 20px; margin-left: auto; color: #9a9a9a; }
.body { padding: 0 15px 0 12px; }
.format { display: grid; gap: 12px; padding: 5px 15px 16px 12px; }
.stack { display: grid; gap: 1px; }
.stack .row:first-child .num { border-radius: 5px 5px 0 0; }
.stack .row:last-child .num { border-radius: 0 0 5px 5px; }
.row { display: grid; grid-template-columns: 147px 1fr; column-gap: 19px; align-items: center; }
.row > label, .name { text-align: right; color: var(--soft); }
.num.full { background: var(--blue); color: #e4ecf8; }
.checks { display: grid; gap: 12px; padding: 2px 0 4px 166px; }
.check { display: flex; align-items: center; gap: 8px; height: 24px; white-space: nowrap; }
.check.off { color: #777; }
.check.weak { color: #a3a3a3; }
.check input { appearance: none; flex: none; width: 24px; height: 24px; border-radius: 4px; background: #4b4b4b; }
.check.off input { background: #3d3d3d; }
.check input:checked { background: var(--blue); }
.check input:checked::after { content: ""; display: block; width: 7px; height: 14px; margin: 2px 0 0 8px; border: solid #fff; border-width: 0 3px 3px 0; transform: rotate(42deg); }
.drop { position: relative; display: flex; align-items: center; height: 32px; background: var(--dark); border-radius: 5px; }
.drop select { padding-left: 12px; }
.pic { padding-left: 10px; }

.highlight { margin: 0 0 0 4px; border: 5px solid #ee2025; border-radius: 2px; padding-bottom: 9px; }
.panel.highlight h2 { height: 40px; padding: 0 11px 0 3px; }
.highlight .body { padding: 13px 10px 0 3px; }
.panel.sub h2 { height: 36px; padding-left: 38px; }
.sub { padding-bottom: 4px; }
.panel.closed h2 { height: 48px; }
.ruled { border-top: 2px solid var(--line); }
.stereo .tri { margin-right: 5px; }
.panel.stereo h2 { height: 47px; }
.panel.output h2 { height: 50px; }
.output .body { padding-top: 8px; }
.path { display: flex; gap: 1px; height: 33px; }
.path input { flex: 1; padding-left: 12px; background: #1a1a1a; border-radius: 5px 0 0 5px; }
.path button { width: 36px; background: #444; border-radius: 0 5px 5px 0; }
.fields { display: grid; gap: 6px; padding: 15px 0 17px; }
.fields .row { grid-template-columns: 152px 1fr; }
.seg { display: grid; gap: 1px; height: 32px; border-radius: 5px; overflow: hidden; }
.three { grid-template-columns: 83fr 82fr 83fr; }
.two { grid-template-columns: 119fr 130fr; }
.seg label { position: relative; display: grid; place-items: center; background: var(--field); color: var(--soft); }
.seg label:has(:checked) { background: var(--blue); color: #e9f0fb; }
.seg input { appearance: none; position: absolute; inset: 0; }
.slider { position: relative; height: 32px; border-radius: 5px; overflow: hidden; background: var(--field); }
.slider input { display: block; appearance: none; width: 100%; height: 100%; background: linear-gradient(90deg, var(--blue) 17%, transparent 17%); }
.slider input::-webkit-slider-thumb { appearance: none; width: 1px; height: 32px; }
.slider output { position: absolute; inset: 0; display: grid; place-items: center; color: var(--soft); pointer-events: none; }
.pairs { display: grid; grid-template-columns: 196px 1fr; row-gap: 15px; margin-left: -4px; padding-bottom: 20px; font-size: 17px; }
.pairs .weak { grid-column: 2; }
.statusbar { height: 32px; background: #1a1a1a; }

.brand { position: absolute; right: 18px; bottom: 16px; display: flex; gap: 9px; align-items: center; }
.brand-text { display: flex; flex-direction: column; align-items: center; }
.brand strong { display: flex; gap: 10px; font: 700 30px/36px "Noto Sans CJK SC", sans-serif; color: #2b3545; -webkit-text-stroke: 2px #c3c7cc; paint-order: stroke; }
.brand small { font: 500 10px/10px Inter, sans-serif; color: #555; -webkit-text-stroke: 1px #aaa; paint-order: stroke; }
```
FILE: grid.js
```js
// Ground-plane grid in two-point perspective around the world origin.
const O = [328, 628], A = [-43, 240], B = [2740, 240], wa = 0.045, wb = 0.02;
const point = (a, b) => {
  const d = 1 + a * wa + b * wb;
  return [0, 1].map(i => ((O[i] + a * wa * A[i] + b * wb * B[i]) / d).toFixed(1)).join(' ');
};
const near = 0.1;
let minor = '', major = '';
for (let b = -40; b <= 60; b++) {
  if (!b) continue;
  const s = `M${point((near - 1 - b * wb) / wa, b)}L${point(70, b)}`;
  if (b % 10) minor += s; else major += s;
}
for (let a = -20; a <= 70; a++) {
  if (!a) continue;
  const s = `M${point(a, (near - 1 - a * wa) / wb)}L${point(a, 120)}`;
  if (a % 10) minor += s; else major += s;
}
document.getElementById('grid-minor').setAttribute('d', minor);
document.getElementById('grid-major').setAttribute('d', major);
```
